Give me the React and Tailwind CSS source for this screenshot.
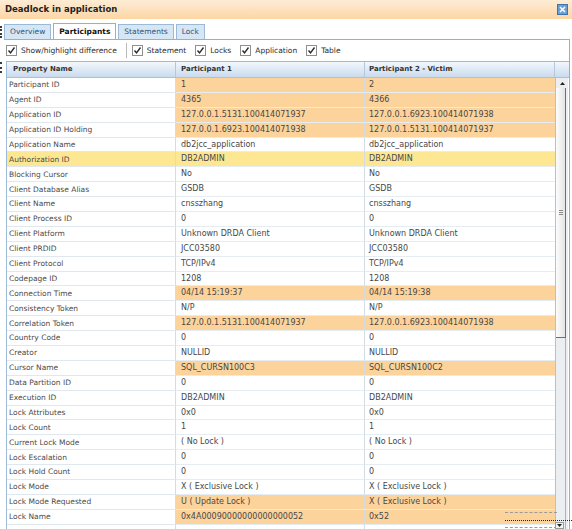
import React from 'react';

const rows = [
  ['Participant ID', '1', '2', 'o'],
  ['Agent ID', '4365', '4366', 'o'],
  ['Application ID', '127.0.0.1.5131.100414071937', '127.0.0.1.6923.100414071938', 'o'],
  ['Application ID Holding', '127.0.0.1.6923.100414071938', '127.0.0.1.5131.100414071937', 'o'],
  ['Application Name', 'db2jcc_application', 'db2jcc_application'],
  ['Authorization ID', 'DB2ADMIN', 'DB2ADMIN', 'y'],
  ['Blocking Cursor', 'No', 'No'],
  ['Client Database Alias', 'GSDB', 'GSDB'],
  ['Client Name', 'cnsszhang', 'cnsszhang'],
  ['Client Process ID', '0', '0'],
  ['Client Platform', 'Unknown DRDA Client', 'Unknown DRDA Client'],
  ['Client PRDID', 'JCC03580', 'JCC03580'],
  ['Client Protocol', 'TCP/IPv4', 'TCP/IPv4'],
  ['Codepage ID', '1208', '1208'],
  ['Connection Time', '04/14 15:19:37', '04/14 15:19:38', 'o'],
  ['Consistency Token', 'N/P', 'N/P'],
  ['Correlation Token', '127.0.0.1.5131.100414071937', '127.0.0.1.6923.100414071938', 'o'],
  ['Country Code', '0', '0'],
  ['Creator', 'NULLID', 'NULLID'],
  ['Cursor Name', 'SQL_CURSN100C3', 'SQL_CURSN100C2', 'o'],
  ['Data Partition ID', '0', '0'],
  ['Execution ID', 'DB2ADMIN', 'DB2ADMIN'],
  ['Lock Attributes', '0x0', '0x0'],
  ['Lock Count', '1', '1'],
  ['Current Lock Mode', '( No Lock )', '( No Lock )'],
  ['Lock Escalation', '0', '0'],
  ['Lock Hold Count', '0', '0'],
  ['Lock Mode', 'X ( Exclusive Lock )', 'X ( Exclusive Lock )'],
  ['Lock Mode Requested', 'U ( Update Lock )', 'X ( Exclusive Lock )', 'o'],
  ['Lock Name', '0x4A00090000000000000052', '0x52', 'o'],
  ['', '', ''],
];

function Check({ label }) {
  return (
    <div className="flex items-center gap-[4px]">
      <span className="w-[11px] h-[11px] border border-[#8e8f8f] bg-white flex items-center justify-center">
        <svg width="9" height="9" viewBox="0 0 9 9">
          <path d="M1.5 4.5 L3.5 6.8 L7.5 1.5" stroke="#2b2b2b" strokeWidth="1.4" fill="none" />
        </svg>
      </span>
      <span className="text-[7.5px] text-[#2a2a2a]">{label}</span>
    </div>
  );
}

function Tab({ label, active }) {
  return active ? (
    <div className="h-[16px] px-[5px] flex items-center bg-white border border-b-0 border-[#8fb2d3] text-[7.5px] font-bold text-[#111] relative z-10">
      {label}
    </div>
  ) : (
    <div className="h-[15px] px-[5px] flex items-center bg-[#d6e6f4] border border-b-0 border-[#9bbad8] text-[7.5px] text-[#2a5580]">
      {label}
    </div>
  );
}

export default function App() {
  return (
    <div className="relative w-[572px] h-[529px] bg-white overflow-hidden" style={{ fontFamily: '"DejaVu Sans", Verdana, sans-serif' }}>
      {/* title bar */}
      <div className="h-[19px] flex items-center justify-between pl-[5px] pr-[4px] bg-gradient-to-b from-[#feecd6] to-[#fcd6a4]">
        <span className="text-[8.5px] font-bold text-[#222]">Deadlock in application</span>
        <svg width="11" height="11" viewBox="0 0 11 11">
          <rect x="0.5" y="0.5" width="10" height="10" fill="#6c9fd6" stroke="#3f73ad" />
          <path d="M3 3 L8 8 M8 3 L3 8" stroke="#fff" strokeWidth="1.5" />
        </svg>
      </div>

      {/* splitter grips */}
      <div className="absolute left-0 top-[26px] w-[3px] h-[12px] border-l-2 border-dotted border-[#3a3a3a]" />
      <div className="absolute left-0 top-[62px] w-[3px] h-[11px] border-l-2 border-dotted border-[#3a3a3a]" />

      {/* tabs */}
      <div className="mt-[5px] pl-[4px] flex items-end gap-[2px] h-[15px]">
        <Tab label="Overview" />
        <Tab label="Participants" active />
        <Tab label="Statements" />
        <Tab label="Lock" />
      </div>

      <div className="ml-[4px] mr-[2px] border-t border-r border-[#8fb2d3] h-[500px]">
        {/* toolbar */}
        <div className="h-[21px] flex items-center pl-[2px]">
          <Check label="Show/highlight difference" />
          <div className="w-px h-[15px] bg-[#b9b9b9] ml-[9px] mr-[5px]" />
          <div className="flex items-center gap-[9px]">
            <Check label="Statement" />
            <Check label="Locks" />
            <Check label="Application" />
            <Check label="Table" />
          </div>
        </div>

        {/* table */}
        <div className="ml-[2px] border-t border-l border-[#9dbad6]">
          <div className="flex h-[16px] border-b border-[#a9c1d9] bg-gradient-to-b from-[#f3f7fc] to-[#c9dbee] text-[7px] font-bold text-[#333]">
            <div className="w-[169px] pl-[6px] flex items-center border-r border-[#b3c8dc]">Property Name</div>
            <div className="w-[189px] pl-[5px] flex items-center border-r border-[#b3c8dc]">Participant 1</div>
            <div className="w-[190px] pl-[4px] flex items-center border-r border-[#b3c8dc]">Participant 2 - Victim</div>
            <div className="flex-1" />
          </div>

          <div className="flex">
            <div className="w-[548px]">
              {rows.map((r, i) => {
                const o = r[3] === 'o';
                const y = r[3] === 'y';
                const cell = o ? 'bg-[#fdd39c]' : y ? 'bg-[#fde793]' : 'bg-white';
                return (
                  <div key={i} className="flex h-[14.9px]">
                    <div className={`w-[169px] pl-[2px] flex items-center border-b border-r border-[#dfe8ee] border-r-[#d3dbe3] text-[7.5px] text-[#4a4a4a] ${y ? 'bg-[#fde793]' : 'bg-white'}`}>
                      {r[0]}
                    </div>
                    <div className={`w-[189px] pl-[5px] flex items-center border-b border-r border-[#e6edf2] border-r-[#d3dbe3] text-[8px] text-[#474747] ${cell}`}>
                      {r[1]}
                    </div>
                    <div className={`w-[190px] pl-[4px] flex items-center border-b border-[#e6edf2] text-[8px] text-[#474747] ${cell}`}>
                      {r[2]}
                    </div>
                  </div>
                );
              })}
            </div>

            {/* scrollbar */}
            <div className="w-[13px] border-l border-[#b7c1ca] bg-[#eceff2] flex flex-col">
              <div className="h-[10px] flex items-center justify-center">
                <svg width="5" height="3" viewBox="0 0 5 3"><path d="M0 3 L2.5 0 L5 3 Z" fill="#222" /></svg>
              </div>
              <div className="w-[10px] h-[250px] bg-gradient-to-r from-[#fdfdfd] to-[#e4e4e4] border-r border-b border-[#6f6f6f] flex items-center justify-center">
                <div className="w-[4px] flex flex-col gap-[1px]">
                  <div className="h-px bg-[#8a8a8a]" />
                  <div className="h-px bg-[#8a8a8a]" />
                  <div className="h-px bg-[#8a8a8a]" />
                </div>
              </div>
              <div className="flex-1 border-r border-[#a9b4be] w-[10px]" />
            </div>
          </div>
        </div>
      </div>

      {/* focus artefacts / down arrow at bottom right */}
      <div className="absolute left-[505px] top-[512px] w-[52px] border-t border-dashed border-[#9a9a9a]" />
      <div className="absolute left-[505px] top-[520px] w-[67px] border-t border-dotted border-[#222]" />
      <div className="absolute left-[505px] top-[527px] w-[52px] border-t border-dashed border-[#9a9a9a]" />
      <div className="absolute left-[555px] top-[522px] w-[9px] h-[7px] bg-[#f3f3f3] border border-[#9a9a9a] flex items-center justify-center">
        <svg width="5" height="3" viewBox="0 0 5 3"><path d="M0 0 L2.5 3 L5 0 Z" fill="#222" /></svg>
      </div>
    </div>
  );
}
